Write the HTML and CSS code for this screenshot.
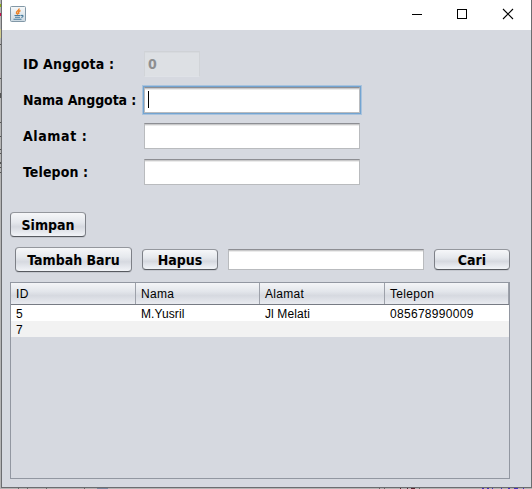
FILE: index.html
```html
<!DOCTYPE html>
<html lang="id">
<head>
<meta charset="utf-8">
<title>Anggota</title>
<link rel="stylesheet" href="styles.css">
</head>
<body>
<div class="desktop">
  <svg class="backdrop" width="532" height="489" shape-rendering="crispEdges">
    <path fill="#8cae16" d="M0 4h1v3H0z"/><path fill="#c9104c" d="M0 13h1v3H0z"/><path fill="#cfcb8c" d="M0 29h1v9H0z"/>
    <path fill="#555" d="M0 44h1v1H0zM0 78h1v1H0zM0 93h1v5H0zM0 122h1v1H0zM0 136h1v1H0zM0 149h1v1H0zM0 153h1v1H0zM0 162h1v2H0zM0 167h1v1H0zM0 172h1v1H0z"/>
    <path fill="#666" d="M18 488h1v1h-1zM27 488h1v1h-1zM46 488h1v1h-1zM84 488h1v1h-1zM379 488h1v1h-1zM384 488h1v1h-1zM419 488h1v1h-1z"/>
    <path fill="#78879c" d="M97 488h11v1H97z"/><path fill="#572532" d="M400 488h1v1h-1zM407 488h1v1h-1zM411 488h4v1h-4z"/>
    <path fill="#4531bd" d="M482 488h2v1h-2zM487 488h2v1h-2zM492 488h1v1h-1zM501 488h1v1h-1zM508 488h2v1h-2zM514 488h4v1h-4zM523 488h1v1h-1z"/>
  </svg>
  <main class="window">
    <header class="titlebar">
      <svg class="java" width="16" height="16" viewBox="0 0 16 16">
        <defs><linearGradient id="tile" x2="0" y2="1"><stop stop-color="#f7f9fa"/><stop offset="1" stop-color="#cbd8e1"/></linearGradient></defs>
        <rect x=".5" y=".5" width="15" height="15" rx="1" fill="url(#tile)" stroke="#8298a7"/>
        <path d="M9 2.500C9.500 4.500 6 5 6.500 7L8 8.500M10.500 4.500C8.500 5.500 8 6.200 9 8" fill="none" stroke="#ec8024" stroke-width="1.500"/>
        <path d="M4.500 9.500h6M5 11.300h5M3.500 13.300h8M11 9.500c3-.8 2.500 1.500.3 2" fill="none" stroke="#477b9d" stroke-width="1.100"/>
      </svg>
      <svg class="controls" width="102" height="12" viewBox="0 0 102 12" fill="none" stroke="#000">
        <path d="M0 6.500h10M45.500 1.500h9v9h-9z" shape-rendering="crispEdges"/>
        <path d="M91 1l10 10M101 1L91 11" stroke-width="1.100"/>
      </svg>
    </header>
    <form class="form">
      <label class="label-id">ID Anggota :</label><div class="field disabled">0</div>
      <label class="label-name">Nama Anggota :</label><div class="field focused"><i class="caret"></i></div>
      <label class="label-address">Alamat :</label><div class="field"></div>
      <label class="label-phone">Telepon :</label><div class="field"></div>
    </form>
    <div class="save"><button class="button tall">Simpan</button></div>
    <div class="toolbar">
      <button class="button tall wide">Tambah Baru</button>
      <button class="button">Hapus</button>
      <div class="field search"></div>
      <button class="button">Cari</button>
    </div>
    <section class="table">
      <div class="row head"><span>ID</span><span>Nama</span><span>Alamat</span><span>Telepon</span></div>
      <div class="row"><span>5</span><span class="tight">M.Yusril</span><span class="tight">Jl Melati</span><span>085678990009</span></div>
      <div class="row odd"><span>7</span><span></span><span></span><span></span></div>
    </section>
  </main>
</div>
</body>
</html>
```
FILE: styles.css
```css
* { box-sizing: border-box; }
body { margin: 0; overflow: hidden; }
.desktop {
  position: relative;
  width: 532px;
  height: 489px;
  padding-left: 1px;
  background: #b5b5b5;
  font-family: "DejaVu Sans Condensed", "DejaVu Sans", sans-serif;
  font-stretch: condensed;
  font-weight: bold;
  font-size: 14px;
  color: #000;
}
.backdrop { position: absolute; left: 0; top: 0; }
.window {
  position: relative;
  width: 531px;
  height: 488px;
  border: 1px solid #6c6d70;
  border-top: 0;
  background: #d6d9e0;
}
.titlebar {
  display: flex;
  justify-content: space-between;
  height: 30px;
  padding: 6px 17px 0 8px;
  background: #fff;
}
.controls { margin-top: 2px; }
.form {
  display: grid;
  grid-template-columns: 121px 216px;
  grid-auto-rows: 26px;
  row-gap: 10px;
  padding: 21px 0 0 21px;
}
label { line-height: 26px; white-space: nowrap; }
.label-id { letter-spacing: .2px; }
.label-name { letter-spacing: -.08px; }
.label-address { letter-spacing: .6px; }
.label-phone { letter-spacing: .1px; }
.field {
  height: 26px;
  background: #fff;
  border: 1px solid #b9bbbe;
  border-top-color: #8d8e93;
  box-shadow: inset 0 1px #c9c9ca, inset 0 2px #ebebeb;
}
.disabled {
  width: 56px;
  padding-left: 3px;
  line-height: 24px;
  color: #8e8f91;
  background: #dde0e4;
  border-color: #cfd2d6 #d1d4d8 #dfe2e7;
  box-shadow: inset 0 1px #d7dade;
}
.focused {
  padding: 3px 0 0 3px;
  box-shadow: inset 0 1px #c9c9ca, inset 0 2px #ebebeb, 0 0 0 1px #73a4d1, 0 0 0 2px #a9c3dd;
}
.caret { display: block; width: 1px; height: 17px; background: #000; }
.save { padding: 27px 0 0 8px; }
.button {
  display: block;
  width: 76px;
  height: 21px;
  padding: 1px 0 0;
  font: inherit;
  line-height: 19px;
  text-align: center;
  white-space: nowrap;
  border: 1px solid #7d8087;
  border-color: #94979d #7d8087 #575a60;
  border-radius: 4px;
  background: linear-gradient(#f6f7f9, #e5e8ed 40%, #d6d9e0 60%, #f2f4f8);
  box-shadow: 0 1px #c4c7ce;
}
.tall { height: 25px; padding-top: 2px; line-height: 21px; }
.wide { width: 117px; }
.toolbar {
  display: flex;
  align-items: center;
  gap: 10px;
  margin-top: 10px;
  padding-left: 13px;
}
.search { width: 196px; height: 21px; }
.table {
  width: 500px;
  height: 197px;
  margin: 10px 0 0 8px;
  border: 1px solid #9297a1;
  font: 12px "Liberation Sans", Arial, sans-serif;
}
.row {
  display: grid;
  grid-template-columns: 125px 124px 125px 124px;
  height: 16px;
  line-height: 19px;
  letter-spacing: .3px;
  background: #fff;
}
.row span { height: 16px; padding-left: 5px; white-space: nowrap; }
.row .tight { letter-spacing: .1px; }
.odd { background: #f2f2f2; }
.head {
  height: 22px;
  line-height: 23px;
  border-bottom: 1px solid #777b84;
  background: linear-gradient(#f4f5f8, #e3e6eb 40%, #d6d9e0 60%, #e9ebf0);
}
.head span { height: 21px; border-right: 1px solid #9da1aa; }
```
